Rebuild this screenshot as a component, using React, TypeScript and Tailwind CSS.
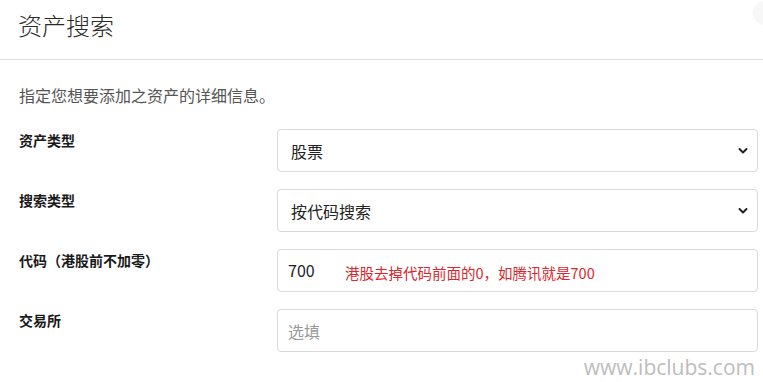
import React from "react";

const font = { fontFamily: '"Noto Sans CJK SC", "Noto Sans", sans-serif' };

function Chevron() {
  return (
    <svg width="10" height="7" viewBox="0 0 10 7" className="absolute right-[9px] top-1/2 -translate-y-1/2">
      <path d="M1.5 1.5 L5 5 L8.5 1.5" fill="none" stroke="#222" strokeWidth="2" strokeLinecap="round" strokeLinejoin="round" />
    </svg>
  );
}

function Row({ label, children }: { label: string; children: React.ReactNode }) {
  return (
    <div className="flex h-[43px]">
      <div className="w-[258px] shrink-0 pt-[1px] text-[14px] leading-[20px] font-bold text-[#1a1a1a]">{label}</div>
      <div className="relative flex-1 h-[43px] border border-[#d9d9d9] rounded-[4px] bg-white flex items-center">{children}</div>
    </div>
  );
}

export default function App() {
  return (
    <div className="w-[763px] h-[382px] bg-white relative overflow-hidden" style={font}>
      <div className="absolute right-[-14px] top-[1px] w-[24px] h-[24px] rounded-full bg-[#f7f7f8]" />
      <div className="h-[60px] border-b border-[#dcdcdc] pl-[18px] pt-[8px]">
        <div className="text-[24px] leading-[34px] font-light text-[#2a2a2a]">资产搜索</div>
      </div>
      <div className="pl-[19px] pr-[5px]">
        <div className="pt-[24px] text-[16px] leading-[22px] text-[#555]">指定您想要添加之资产的详细信息。</div>
        <div className="mt-[23px] flex flex-col gap-[17px]">
          <Row label="资产类型">
            <span className="pl-[13px] text-[16px] text-[#222]">股票</span>
            <Chevron />
          </Row>
          <Row label="搜索类型">
            <span className="pl-[13px] text-[16px] text-[#222]">按代码搜索</span>
            <Chevron />
          </Row>
          <Row label="代码（港股前不加零）">
            <span className="pl-[10px] pb-[1px] text-[16px] text-[#222]">700</span>
            <span className="absolute left-[67px] top-[13px] text-[14.5px] leading-[20px] text-[#d9272e]">港股去掉代码前面的0，如腾讯就是700</span>
          </Row>
          <Row label="交易所">
            <span className="pl-[10px] text-[16px] text-[#9a9a9a]">选填</span>
          </Row>
        </div>
        <div className="flex justify-end pr-[3px] mt-[2px]">
          <span className="text-[21px] leading-[26px] text-[#bdbdbd]" style={{ fontFamily: '"Open Sans", "Liberation Sans", sans-serif' }}>www.ibclubs.com</span>
        </div>
      </div>
    </div>
  );
}
